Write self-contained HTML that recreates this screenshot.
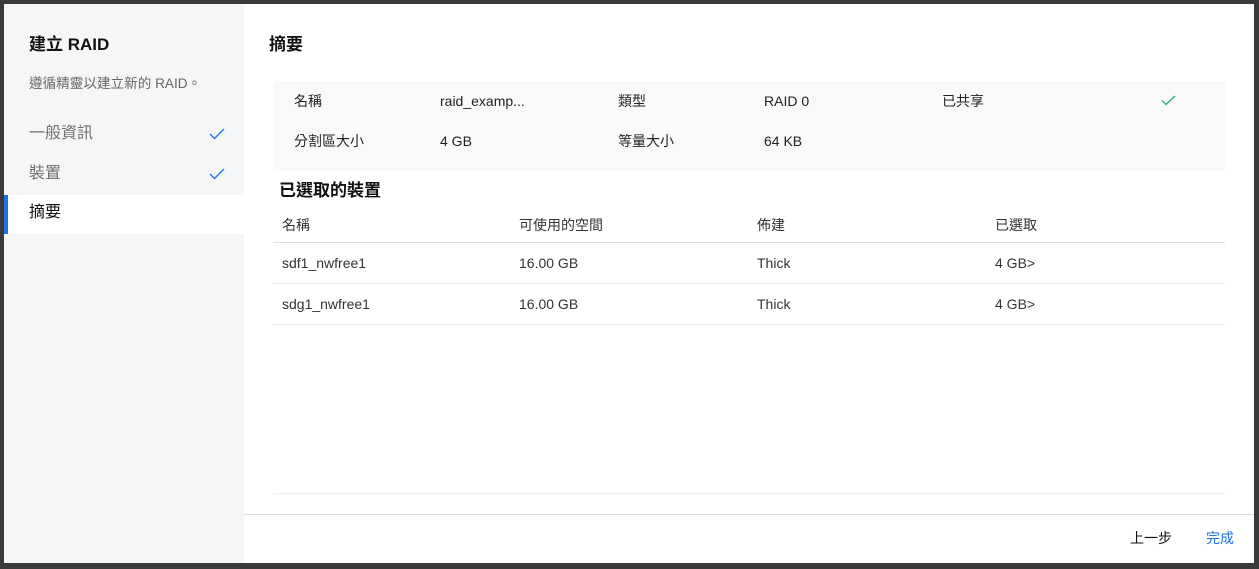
<!DOCTYPE html>
<html><head><meta charset="utf-8"><style>
*{margin:0;padding:0;box-sizing:border-box}
body{width:1259px;height:569px;background:#3a3a3a;position:relative;overflow:hidden;font-family:"Liberation Sans","Noto Sans CJK TC",sans-serif;color:#222;font-size:14px}
.a{position:absolute;white-space:nowrap;line-height:1}
#dlg{position:absolute;left:4px;top:4px;width:1250px;height:559px;background:#fff}
#side{position:absolute;left:4px;top:4px;width:240px;height:559px;background:#f5f6f8}
.hl{position:absolute;height:1px;background:#e6e6e6}
.chk{position:absolute}
</style></head><body>
<div id="dlg"></div>
<div id="side"></div>
<div class="a" style="left:29px;top:36px;font-size:17px;font-weight:bold;color:#111">建立 RAID</div>
<div class="a" style="left:29px;top:77px;font-size:13.6px;color:#666">遵循精靈以建立新的 RAID。</div>
<div class="a" style="left:29px;top:126px;font-size:16px;color:#707070">一般資訊</div>
<div class="a" style="left:29px;top:166px;font-size:16px;color:#707070">裝置</div>
<svg class="chk" style="left:209px;top:128px" width="16" height="12"><path d="M1 6 L5.5 10.5 L15 1" stroke="#1a73e8" stroke-width="1.4" fill="none"/></svg>
<svg class="chk" style="left:209px;top:168px" width="16" height="12"><path d="M1 6 L5.5 10.5 L15 1" stroke="#1a73e8" stroke-width="1.4" fill="none"/></svg>
<div style="position:absolute;left:4px;top:195px;width:240px;height:39px;background:#fff"></div>
<div style="position:absolute;left:4px;top:195px;width:4px;height:39px;background:#1a73e8"></div>
<div class="a" style="left:29px;top:205px;font-size:16px;color:#111">摘要</div>

<div class="a" style="left:269px;top:36px;font-size:17px;font-weight:bold;color:#111">摘要</div>
<div style="position:absolute;left:273px;top:81px;width:952px;height:90px;background:#f9f9f9"></div>
<div class="a" style="left:294px;top:94px">名稱</div>
<div class="a" style="left:440px;top:94px">raid_examp...</div>
<div class="a" style="left:618px;top:94px">類型</div>
<div class="a" style="left:764px;top:94px">RAID 0</div>
<div class="a" style="left:942px;top:94px">已共享</div>
<svg class="chk" style="left:1161px;top:95px" width="15" height="11"><path d="M1 5.5 L5 9.5 L14 1" stroke="#2bb57a" stroke-width="1.5" fill="none"/></svg>
<div class="a" style="left:294px;top:134px">分割區大小</div>
<div class="a" style="left:440px;top:134px">4 GB</div>
<div class="a" style="left:618px;top:134px">等量大小</div>
<div class="a" style="left:764px;top:134px">64 KB</div>

<div class="a" style="left:279px;top:182px;font-size:17px;font-weight:bold;color:#111">已選取的裝置</div>
<div class="a" style="left:282px;top:218px;color:#333">名稱</div>
<div class="a" style="left:519px;top:218px;color:#333">可使用的空間</div>
<div class="a" style="left:757px;top:218px;color:#333">佈建</div>
<div class="a" style="left:995px;top:218px;color:#333">已選取</div>
<div class="hl" style="left:273px;top:242px;width:952px;background:#dcdcdc"></div>
<div class="a" style="left:282px;top:256px;color:#333">sdf1_nwfree1</div>
<div class="a" style="left:519px;top:256px;color:#333">16.00 GB</div>
<div class="a" style="left:757px;top:256px;color:#333">Thick</div>
<div class="a" style="left:995px;top:256px;color:#333">4 GB&gt;</div>
<div class="hl" style="left:273px;top:283px;width:952px"></div>
<div class="a" style="left:282px;top:297px;color:#333">sdg1_nwfree1</div>
<div class="a" style="left:519px;top:297px;color:#333">16.00 GB</div>
<div class="a" style="left:757px;top:297px;color:#333">Thick</div>
<div class="a" style="left:995px;top:297px;color:#333">4 GB&gt;</div>
<div class="hl" style="left:273px;top:324px;width:952px"></div>
<div class="hl" style="left:273px;top:493px;width:952px;background:#eee"></div>
<div class="hl" style="left:244px;top:514px;width:1010px;background:#ddd"></div>
<div class="a" style="left:1130px;top:531px;color:#111">上一步</div>
<div class="a" style="left:1206px;top:531px;color:#1a73e8">完成</div>
</body></html>
